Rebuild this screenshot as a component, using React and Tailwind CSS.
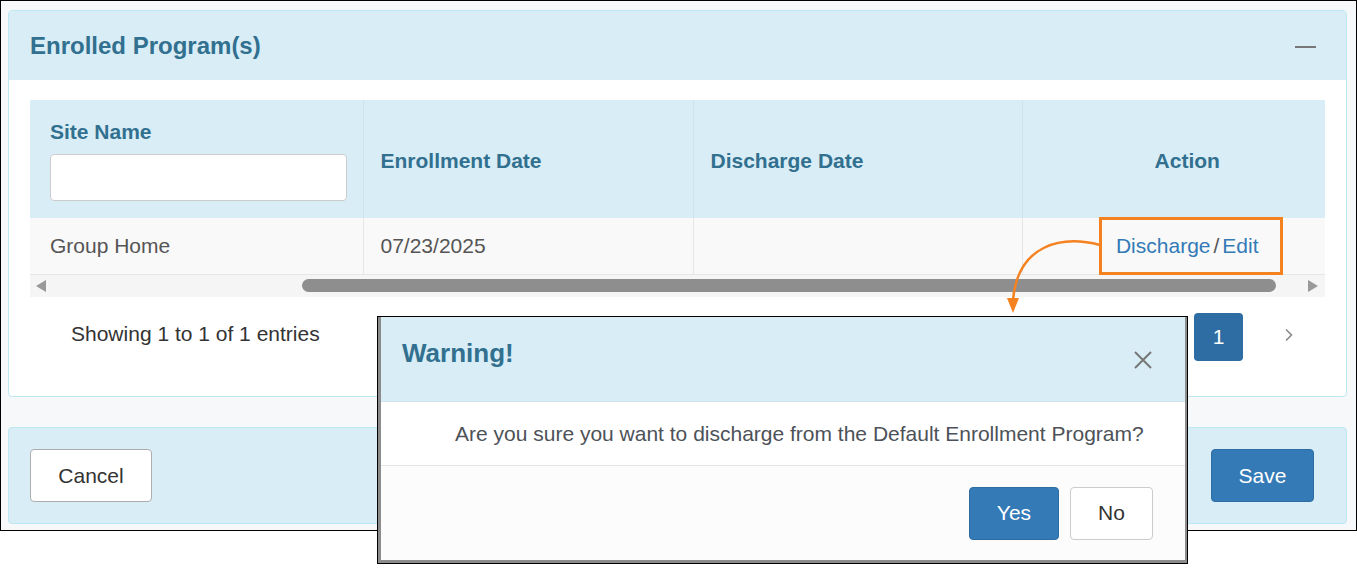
import { ChevronRight } from 'lucide-react';

const headCell = 'align-middle text-left font-bold text-[21px] text-[#31708f] border-r border-[#cfe3ee]';
const bodyCell = 'align-middle text-left text-[21px] text-[#555] border-r border-[#e6e6e6]';

const App = () => {
  return (
    <div className="relative w-[1357px] h-[568px] bg-white overflow-hidden font-['Liberation_Sans',Arial,sans-serif]">
      {/* Main screenshot frame */}
      <div className="w-[1357px] h-[531px] border border-black bg-[#f6f8fa] pl-[7px] pr-[9px] pt-[9px]">
        {/* Enrolled programs panel */}
        <div className="h-[387px] border border-[#bce8f1] rounded-[4px] bg-white overflow-hidden">
          <div className="h-[69px] bg-[#d9edf7] flex items-center justify-between pl-[21px] pr-[30px]">
            <h2 className="text-[24px] font-bold text-[#31708f]">Enrolled Program(s)</h2>
            <div className="w-[21px] h-[2px] bg-[#777] mt-[2px]" />
          </div>

          <div className="pl-[21px] pr-[20px] pt-[20px]">
            <div className="w-[1295px] overflow-hidden">
              <table className="w-[1322px] table-fixed border-collapse">
                <colgroup>
                  <col className="w-[333px]" />
                  <col className="w-[330px]" />
                  <col className="w-[329px]" />
                  <col className="w-[330px]" />
                </colgroup>
                <thead>
                  <tr className="h-[118px] bg-[#d9edf7]">
                    <th className={`${headCell} pl-[20px]`}>
                      <div className="leading-[24px] mb-[10px] mt-[2px]">Site Name</div>
                      <input className="block w-[297px] h-[47px] bg-white border border-[#ccc] rounded-[4px]" />
                    </th>
                    <th className={`${headCell} pl-[17px] pt-[3px]`}>Enrollment Date</th>
                    <th className={`${headCell} pl-[17px] pt-[3px]`}>Discharge Date</th>
                    <th className="align-middle text-center font-bold text-[21px] text-[#31708f] pt-[3px]">Action</th>
                  </tr>
                </thead>
                <tbody>
                  <tr className="h-[56px] bg-[#f9f9f9] border-b border-[#e6e6e6]">
                    <td className={`${bodyCell} pl-[20px]`}>Group Home</td>
                    <td className={`${bodyCell} pl-[17px]`}>07/23/2025</td>
                    <td className={bodyCell}></td>
                    <td className="align-middle text-center text-[21px]">
                      <span className="text-[#337ab7]">Discharge</span>
                      <span className="text-[#555] mx-[3px]">/</span>
                      <span className="text-[#337ab7]">Edit</span>
                    </td>
                  </tr>
                </tbody>
              </table>

              {/* horizontal scrollbar */}
              <div className="h-[22px] bg-[#f5f5f5] flex items-center pl-[6px] pr-[7px]">
                <div className="w-0 h-0 border-y-[6px] border-y-transparent border-r-[10px] border-r-[#999]" />
                <div className="ml-[256px] w-[974px] h-[13px] rounded-full bg-[#8e8e8e]" />
                <div className="ml-auto w-0 h-0 border-y-[6px] border-y-transparent border-l-[10px] border-l-[#999]" />
              </div>
            </div>

            <div className="mt-[16px] h-[48px] flex items-center">
              <span className="pl-[41px] -mt-[6px] text-[21px] text-[#333]">Showing 1 to 1 of 1 entries</span>
              <div className="ml-auto flex items-center">
                <span className="w-[49px] h-[48px] rounded-[4px] bg-[#2e6da4] text-white text-[21px] flex items-center justify-center">1</span>
                <ChevronRight className="ml-[36px] mr-[27px] -mt-[4px] w-[20px] h-[20px] text-[#888]" strokeWidth={2} />
              </div>
            </div>
          </div>
        </div>

        {/* Footer panel */}
        <div className="mt-[30px] h-[97px] border border-[#bce8f1] rounded-[4px] bg-[#d9edf7] flex items-center justify-between pl-[21px] pr-[32px]">
          <button className="w-[122px] h-[53px] bg-white border border-[#adadad] rounded-[4px] text-[21px] text-[#333]">Cancel</button>
          <button className="w-[103px] h-[53px] bg-[#337ab7] border border-[#2e6da4] rounded-[4px] text-[21px] text-white">Save</button>
        </div>
      </div>

      {/* Orange annotation box */}
      <div className="absolute left-[1099px] top-[217px] w-[184px] h-[58px] border-[3px] border-[#f58220]" />

      {/* Orange annotation arrow */}
      <svg className="absolute left-[1000px] top-[230px]" width="102" height="90" viewBox="0 0 102 90">
        <path d="M100 15 C 62 5, 18 14, 13 70" fill="none" stroke="#f58220" strokeWidth="2.5" />
        <polygon points="7,68 19,68 13,83" fill="#f58220" />
      </svg>

      {/* Warning modal */}
      <div className="absolute left-[377px] top-[316px] w-[811px] h-[248px] border border-black bg-white">
        <div className="h-full border-l-[3px] border-r-[2px] border-b-[3px] border-[#8c8c8c] flex flex-col">
          <div className="h-[85px] bg-[#d9edf7] border-b border-[#cfe3ee] flex items-center justify-between pl-[21px] pr-[32px]">
            <h3 className="text-[26px] font-bold text-[#31708f] -mt-[12px]">Warning!</h3>
            <svg width="20" height="20" viewBox="0 0 20 20" className="mt-[2px]">
              <path d="M2 2 L18 18 M18 2 L2 18" stroke="#777" strokeWidth="2" />
            </svg>
          </div>
          <div className="h-[64px] border-b border-[#e5e5e5] flex items-center pl-[74px]">
            <p className="text-[21px] text-[#4d5258]">Are you sure you want to discharge from the Default Enrollment Program?</p>
          </div>
          <div className="flex-1 bg-[#fcfcfc] flex items-center justify-end gap-[11px] pr-[32px]">
            <button className="w-[90px] h-[53px] bg-[#337ab7] border border-[#2e6da4] rounded-[4px] text-[21px] text-white">Yes</button>
            <button className="w-[83px] h-[53px] bg-white border border-[#ccc] rounded-[4px] text-[21px] text-[#333]">No</button>
          </div>
        </div>
      </div>
    </div>
  );
};

export default App;
